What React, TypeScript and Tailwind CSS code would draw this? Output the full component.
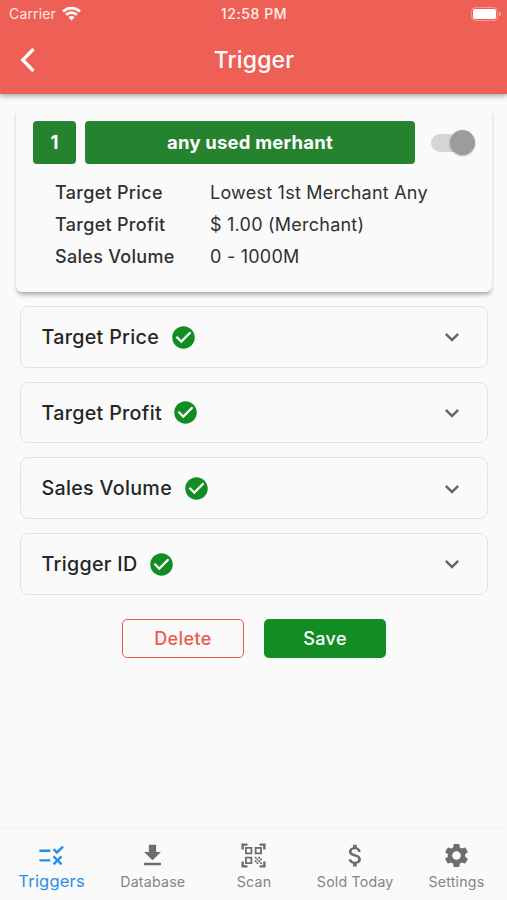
import type { ReactNode } from "react";
import type { IconType } from "react-icons";
import {
  MdAttachMoney,
  MdCheckCircle,
  MdDownload,
  MdExpandMore,
  MdQrCodeScanner,
  MdRule,
  MdSettings,
} from "react-icons/md";

function StatusBar() {
  return (
    <div className="grid h-[27px] grid-cols-3 items-center pt-px pr-[6px] pl-[9px] text-[14px] leading-none">
      <div className="flex items-center gap-[6px]">
        <span className="tracking-[0.15px] text-white/85">Carrier</span>
        <svg className="-mt-[2px]" width="19" height="15" viewBox="0 0 19 15" fill="none" stroke="white" strokeWidth="2.7">
          <path d="M1 5.6a12.2 12.2 0 0 1 17 0" />
          <path d="M4.1 8.8a7.8 7.8 0 0 1 10.8 0" />
          <path d="M9.5 14.5 6.5 11.3a4.4 4.4 0 0 1 6 0Z" fill="white" stroke="none" />
        </svg>
      </div>
      <span className="-ml-[2px] text-center text-[14px] font-medium tracking-[0.6px] whitespace-nowrap text-white/90">12:58 PM</span>
      <div className="flex items-center justify-end gap-px">
        <div className="h-[14px] w-[27px] rounded-[4.5px] border-[1.5px] border-white/35 p-px">
          <div className="h-full rounded-[2px] bg-white" />
        </div>
        <div className="h-1 w-[2px] rounded-r-full bg-white/45" />
      </div>
    </div>
  );
}

function Header() {
  return (
    <header className="relative z-10 h-[94px] shrink-0 bg-[#ee6055] text-white shadow-[0_2px_5px_rgba(0,0,0,0.35)]">
      <StatusBar />
      <div className="grid h-[66px] grid-cols-[60px_1fr_60px] items-center">
        <svg className="ml-[20px]" width="16" height="26" viewBox="0 0 16 26" fill="none" stroke="white" strokeWidth="3.3">
          <path d="M13.5 2 2.8 13l10.7 11" />
        </svg>
        <h1 className="pl-px text-center text-[23px] font-medium tracking-[0.15px]">Trigger</h1>
      </div>
    </header>
  );
}

const details = [
  ["Target Price", "Lowest 1st Merchant Any"],
  ["Target Profit", "$ 1.00 (Merchant)"],
  ["Sales Volume", "0 - 1000M"],
];

function SummaryCard() {
  return (
    <section className="mt-[13px] mr-[15px] ml-4 h-[185px] shrink-0 rounded-[6px] bg-[#fafafa] pt-[14px] pl-[17px] shadow-[0_4px_4px_-1px_rgba(0,0,0,0.28),0_1px_2px_rgba(0,0,0,0.06)]">
      <div className="flex h-[43px] items-center text-[18.5px] font-bold text-white">
        <div className="flex h-full w-[43px] items-center justify-center rounded-[4px] bg-[#25832f]">1</div>
        <div className="ml-[9px] flex h-full w-[330px] items-center justify-center rounded-[4px] bg-[#25832f] tracking-[0.2px]">
          any used merhant
        </div>
        <div className="ml-[16px] flex h-[18px] w-[44px] items-center justify-end rounded-full bg-[#d5d5d5]">
          <div className="size-[25px] shrink-0 rounded-full bg-[#9c9c9c] shadow-[0_1px_2px_rgba(0,0,0,0.3)]" />
        </div>
      </div>
      <dl className="mt-[12.5px] ml-[22px] text-[18px] leading-8 text-[#303030]">
        {details.map(([name, value]) => (
          <div key={name} className="grid grid-cols-[155px_1fr]">
            <dt className="font-medium tracking-[0.3px]">{name}</dt>
            <dd className="tracking-[0.23px]">{value}</dd>
          </div>
        ))}
      </dl>
    </section>
  );
}

function Section({ children }: { children: ReactNode }) {
  return (
    <div className="flex h-[61.5px] items-center rounded-[8px] border-[1.5px] border-[#e3e3e3] pt-px pr-[21px] pl-[20.5px]">
      <span className="pt-px text-[19.7px] font-medium tracking-[0.3px] text-[#262626]">{children}</span>
      <MdCheckCircle size={27} className="ml-[10.5px] text-[#128d24]" />
      <MdExpandMore size={28} className="ml-auto text-[#666]" />
    </div>
  );
}

const tabs: { label: string; Icon: IconType }[] = [
  { label: "Triggers", Icon: MdRule },
  { label: "Database", Icon: MdDownload },
  { label: "Scan", Icon: MdQrCodeScanner },
  { label: "Sold Today", Icon: MdAttachMoney },
  { label: "Settings", Icon: MdSettings },
];

function TabBar() {
  return (
    <nav className="mt-auto grid h-[71px] shrink-0 grid-cols-5 bg-[#fafafa] pl-px shadow-[0_-1px_4px_rgba(0,0,0,0.03)]">
      {tabs.map(({ label, Icon }, i) => (
        <div
          key={label}
          className={`flex flex-col items-center pt-[12px] whitespace-nowrap ${i === 0 ? "text-[#268ee8]" : "text-[#6d6d6d]"}`}
        >
          <Icon size={29} />
          <span className={i === 0 ? "text-[16.5px] leading-[22px] tracking-[0.2px]" : "mt-px text-[14.2px] leading-[22px] tracking-[0.2px] text-[#858585]"}>
            {label}
          </span>
        </div>
      ))}
    </nav>
  );
}

export default function App() {
  return (
    <div className="flex h-[900px] w-[507px] flex-col overflow-hidden bg-[#fafafa] font-[Inter,sans-serif]">
      <Header />
      <SummaryCard />
      <main className="mt-[14px] mr-[19px] ml-5 flex flex-col gap-[14.2px]">
        <Section>Target Price</Section>
        <Section>Target Profit</Section>
        <Section>Sales Volume</Section>
        <Section>Trigger ID</Section>
      </main>
      <div className="mt-[24px] ml-px flex justify-center gap-[20px] text-[18px] font-medium tracking-[0.4px]">
        <button className="h-[39px] w-[122px] rounded-[5px] border-[1.5px] border-[#ec5a4f] text-[#ec5a4f]">Delete</button>
        <button className="h-[39px] w-[122px] rounded-[5px] bg-[#128d24] text-white">Save</button>
      </div>
      <TabBar />
    </div>
  );
}
